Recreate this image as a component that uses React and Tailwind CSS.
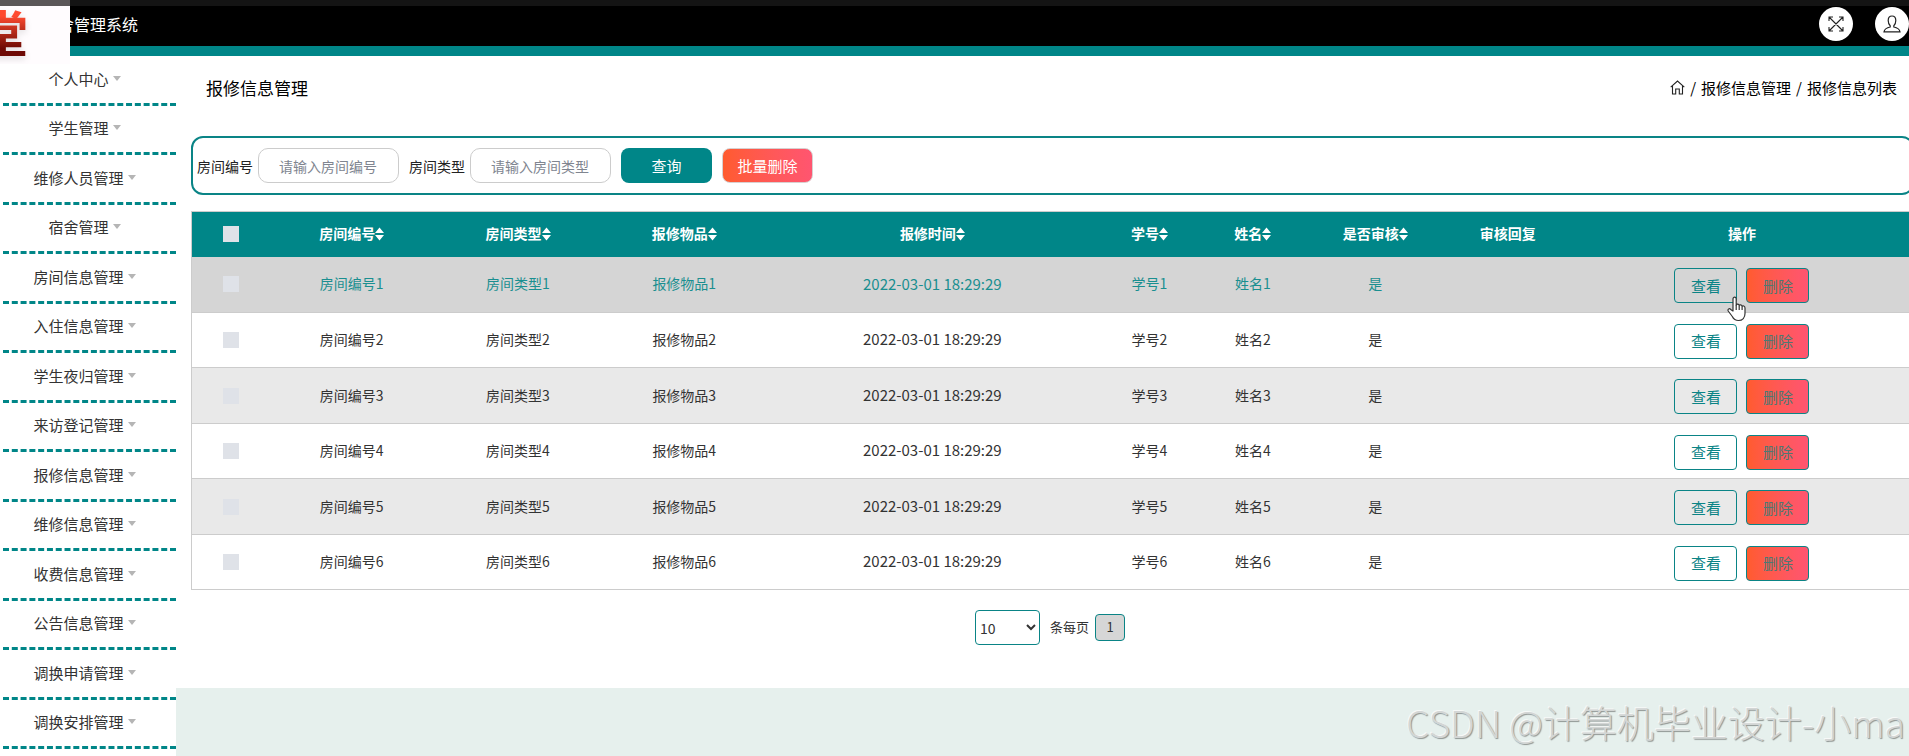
import React, { useState } from "react";

const menus = [
    "个人中心",
    "学生管理",
    "维修人员管理",
    "宿舍管理",
    "房间信息管理",
    "入住信息管理",
    "学生夜归管理",
    "来访登记管理",
    "报修信息管理",
    "维修信息管理",
    "收费信息管理",
    "公告信息管理",
    "调换申请管理",
    "调换安排管理",
];

const columns = [
    { title: "房间编号", sortable: true, width: "w-[9.6%]" },
    { title: "房间类型", sortable: true, width: "w-[9.7%]" },
    { title: "报修物品", sortable: true, width: "w-[9.6%]" },
    { title: "报修时间", sortable: true, width: "w-[19.2%]" },
    { title: "学号", sortable: true, width: "w-[6%]" },
    { title: "姓名", sortable: true, width: "w-[6%]" },
    { title: "是否审核", sortable: true, width: "w-[8.2%]" },
    { title: "审核回复", sortable: false, width: "w-[7.2%]" },
    { title: "操作", sortable: false, width: "w-[20%]" },
];

const rows = [1, 2, 3, 4, 5, 6].map((n) => ({
    id: n,
    room: `房间编号${n}`,
    type: `房间类型${n}`,
    item: `报修物品${n}`,
    time: "2022-03-01 18:29:29",
    studentNo: `学号${n}`,
    name: `姓名${n}`,
    checked: "是",
    reply: "",
}));

const SortIcon = () => (
    <svg className="inline-block align-[-2px]" width="9" height="14" viewBox="0 0 9 14" fill="currentColor" aria-hidden="true">
        <path d="M4.5 0.500L9 6H0zM4.500 13.500L0 8h9z" />
    </svg>
);

const FullscreenIcon = () => (
    <svg width="16" height="16" viewBox="0 0 16 16" fill="none" stroke="#222" strokeWidth="1.1" aria-hidden="true">
        <path d="M1 1l14 14M15 1L1 15M1 5V1h4M11 1h4v4M15 11v4h-4M5 15H1v-4" />
    </svg>
);

const UserIcon = () => (
    <svg width="18" height="18" viewBox="0 0 18 18" fill="none" stroke="#222" strokeWidth="1.2" aria-hidden="true">
        <path d="M7.200 10.800C5.800 9.500 5.200 7.800 5.200 5.500 5.200 2.800 6.700 1 9 1s3.800 1.800 3.800 4.500c0 2.300-.6 4-2 5.300v1.200c3 .6 5.700 1.800 6.200 4.800H1c.5-3 3.200-4.200 6.200-4.800z" />
    </svg>
);

const HomeIcon = () => (
    <svg width="15" height="15" viewBox="0 0 15 15" fill="none" stroke="#222" strokeWidth="1.1" aria-hidden="true">
        <path d="M.7 7.200L7.500 1l6.800 6.200M2.500 5.800V14h3.200V9h3.600v5h3.200V5.800" />
    </svg>
);

const HandCursor = () => (
    <svg className="pointer-events-none absolute top-[30px] left-[53px]" width="20" height="26" viewBox="0 0 20 26" fill="#fff" stroke="#333" strokeWidth="1.2" strokeLinejoin="round" aria-hidden="true">
        <path d="M6 15V3c0-2.500 3.200-2.500 3.200 0v6c.3-1.300 2.800-1.200 3 .6.500-1.200 2.700-1 2.900.8.600-1 2.900-.7 2.900 1.600v5.500c0 4-2.500 7-6.500 7-3.300 0-5-1.500-6.200-4L1.200 15c-.8-2 1.200-3 2.500-1.600z" />
        <path d="M9.200 9v5M12.200 10v4M15.100 10.800V14" fill="none" />
    </svg>
);

const Header = () => (
    <header className="relative flex h-14 items-center border-t-[6px] border-b-[10px] border-t-[#141414] border-b-[#008688] bg-black pb-1 pl-[58px]">
        <h1 className="flex-1 text-base text-white">舍管理系统</h1>
        <div className="absolute -top-1.5 left-0 flex h-16 w-[70px] items-start overflow-hidden border-t-[6px] border-[#5b5758] bg-[#fffcfe]">
            <span className="-ml-[22px] bg-linear-to-b from-[#ff4a30] from-20% to-[#6e0a05] to-85% bg-clip-text font-['Noto_Sans_CJK_SC',sans-serif] text-[50px] leading-[50px] font-bold text-transparent drop-shadow-md">
                堂
            </span>
        </div>
        <div className="flex gap-[22px]">
            <button type="button" aria-label="全屏" className="flex size-[34px] items-center justify-center rounded-full bg-white">
                <FullscreenIcon />
            </button>
            <button type="button" aria-label="用户" className="flex size-[34px] items-center justify-center rounded-full bg-white">
                <UserIcon />
            </button>
        </div>
    </header>
);

const Sidebar = () => (
    <nav className="flex w-44 shrink-0 flex-col bg-white pb-[7px] pl-[3px]">
        {menus.map((menu) => (
            <a key={menu} href="#" className="flex flex-1 items-center justify-center gap-1 border-b-[3px] border-dashed border-[#008688] pr-2.5 pb-0.5 text-[15px] text-[#333]">
                {menu}
                <svg width="8" height="5" viewBox="0 0 8 5" fill="#b5b5b5" aria-hidden="true">
                    <path d="M0 0h8L4 5z" />
                </svg>
            </a>
        ))}
    </nav>
);

const SearchField = ({ id, label, value, onChange }) => (
    <div className="flex items-center gap-[5px]">
        <label htmlFor={id}>{label}</label>
        <input
            id={id}
            type="text"
            value={value}
            onChange={(e) => onChange(e.target.value)}
            placeholder={`请输入${label}`}
            className="h-[35px] w-[141px] rounded-[10px] border border-[#ccc] px-5 outline-none placeholder:text-[#808590]"
        />
    </div>
);

const App = () => {
    const [room, setRoom] = useState("");
    const [type, setType] = useState("");
    const [pageSize, setPageSize] = useState("10");

    return (
        <div className="flex min-h-screen flex-col overflow-hidden bg-[#e6f0ed] font-['Noto_Sans_CJK_SC',sans-serif] text-sm text-[#222]">
            <Header />
            <div className="flex flex-1">
                <Sidebar />
                <div className="relative min-w-0 flex-1">
                    <main className="bg-white pb-[43px] pl-[15px]">
                        <div className="flex h-20 items-center justify-between pr-3 pb-4 pl-[15px] text-black">
                            <h2 className="text-[17px]">报修信息管理</h2>
                            <div className="flex items-center gap-[5px] text-[15px]">
                                <a href="#" aria-label="首页"><HomeIcon /></a>
                                <span>/</span>
                                <a href="#">报修信息管理</a>
                                <span>/</span>
                                <span>报修信息列表</span>
                            </div>
                        </div>

                        <form onSubmit={(e) => e.preventDefault()} className="-mr-[5px] flex items-center gap-2.5 rounded-xl border-2 border-[#0a8486] px-1 py-2.5">
                            <SearchField id="room" label="房间编号" value={room} onChange={setRoom} />
                            <SearchField id="type" label="房间类型" value={type} onChange={setType} />
                            <button type="submit" className="h-[35px] w-[91px] rounded-lg bg-[#008688] text-[15px] text-white">查询</button>
                            <button type="button" className="h-[35px] w-[91px] rounded-lg border border-[#d8d0d0] bg-linear-to-r from-[#ff5b2e] to-[#ff5570] text-[15px] text-white">批量删除</button>
                        </form>

                        <div className="mt-4 -mr-[6px]">
                            <table className="w-full table-fixed border border-[#ccc] text-center">
                                <thead>
                                    <tr className="h-[45px] bg-[#008688] text-white">
                                        <th className="w-[4.5%]">
                                            <input type="checkbox" aria-label="全选" className="mx-auto block size-4 appearance-none bg-[#dfe2e8]" />
                                        </th>
                                        {columns.map((col) => (
                                            <th key={col.title} className={`pb-0.5 font-bold ${col.width}`}>
                                                {col.title}
                                                {col.sortable && <SortIcon />}
                                            </th>
                                        ))}
                                    </tr>
                                </thead>
                                <tbody>
                                    {rows.map((row, index) => (
                                        <tr
                                            key={row.id}
                                            className={`border-b border-[#ccc] odd:h-14 even:h-[55px] even:bg-white ${index === 0 ? "bg-[#d5d5d5] text-[#1a8f90]" : "text-[#333] odd:bg-[#e9e9e9]"}`}
                                        >
                                            <td>
                                                <input type="checkbox" aria-label={row.room} className="mx-auto block size-4 appearance-none bg-[#dfe2e8]" />
                                            </td>
                                            <td className="pb-0.5">{row.room}</td>
                                            <td className="pb-0.5">{row.type}</td>
                                            <td className="pb-0.5">{row.item}</td>
                                            <td className="pb-0.5 text-[15px]">{row.time}</td>
                                            <td className="pb-0.5">{row.studentNo}</td>
                                            <td className="pb-0.5">{row.name}</td>
                                            <td className="pb-0.5">{row.checked}</td>
                                            <td className="pb-0.5">{row.reply}</td>
                                            <td>
                                                <div className="relative mx-auto flex w-fit gap-[9px] pt-0.5 text-[15px]">
                                                    <button type="button" className="h-[35px] w-[63px] rounded border border-[#0a8486] text-[#0a8486]">查看</button>
                                                    <button type="button" className="h-[35px] w-[63px] rounded border border-[#0a8486] bg-linear-to-r from-[#ff5b2e] to-[#ff5570] text-[#4d7873]">删除</button>
                                                    {index === 0 && <HandCursor />}
                                                </div>
                                            </td>
                                        </tr>
                                    ))}
                                </tbody>
                            </table>
                        </div>

                        <div className="mt-5 flex items-center justify-center text-[13px] text-[#333]">
                            <select
                                aria-label="每页条数"
                                value={pageSize}
                                onChange={(e) => setPageSize(e.target.value)}
                                className="h-[35px] w-[65px] rounded border border-[#0a8486] bg-white text-sm"
                            >
                                <option>10</option>
                                <option>20</option>
                                <option>50</option>
                            </select>
                            <span className="mr-1.5 ml-2.5">条每页</span>
                            <button type="button" className="h-[27px] w-[30px] rounded border border-[#0a8486] bg-[#d6d6d6]">1</button>
                        </div>
                    </main>
                    <p className="absolute right-1 bottom-1.5 text-[37px] leading-[56px] font-light whitespace-nowrap text-[#d3d6d5] [text-shadow:1px_1px_1px_#8f9593,-1px_-1px_0_#f7f9f8]">
                        CSDN @计算机毕业设计-小ma
                    </p>
                </div>
            </div>
        </div>
    );
};

export default App;
